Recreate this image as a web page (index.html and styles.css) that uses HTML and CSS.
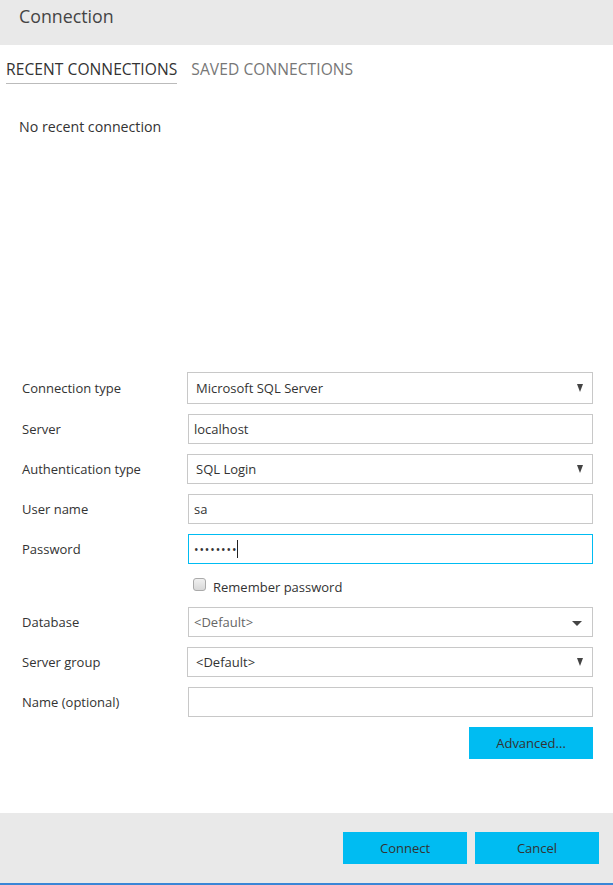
FILE: index.html
```html
<!DOCTYPE html>
<html>
<head>
<meta charset="utf-8">
<link rel="stylesheet" href="styles.css">
</head>
<body>
<div class="dialog">
  <div class="header">Connection</div>
  <div class="tabs">
    <div class="tab active">RECENT CONNECTIONS</div>
    <div class="tab">SAVED CONNECTIONS</div>
  </div>
  <div class="recent">No recent connection</div>
  <div class="form">
    <div class="label">Connection type</div>
    <div class="control select first"><span>Microsoft SQL Server</span><span class="arrow"></span></div>

    <div class="label">Server</div>
    <div class="control input"><span>localhost</span></div>

    <div class="label">Authentication type</div>
    <div class="control select"><span>SQL Login</span><span class="arrow"></span></div>

    <div class="label">User name</div>
    <div class="control input"><span>sa</span></div>

    <div class="label">Password</div>
    <div class="control input focus"><span class="dots">••••••••</span><span class="caret"></span></div>

    <div class="label"></div>
    <div class="check-row"><span class="checkbox"></span><span>Remember password</span></div>

    <div class="label">Database</div>
    <div class="control input combo"><span class="muted">&lt;Default&gt;</span><span class="arrow wide"></span></div>

    <div class="label">Server group</div>
    <div class="control select"><span>&lt;Default&gt;</span><span class="arrow"></span></div>

    <div class="label">Name (optional)</div>
    <div class="control input"></div>

    <div class="label"></div>
    <div class="adv-row"><button class="btn adv">Advanced...</button></div>
  </div>
  <div class="spacer"></div>
  <div class="footer">
    <button class="btn">Connect</button>
    <button class="btn">Cancel</button>
  </div>
</div>
</body>
</html>
```

FILE: styles.css
```css
* { box-sizing: border-box; }
html, body { margin: 0; padding: 0; }
body {
  width: 613px;
  height: 885px;
  background: #fff;
  font-family: "Open Sans", "Noto Sans", sans-serif;
  font-size: 12.5px;
  color: #333;
  overflow: hidden;
}
.dialog {
  height: 885px;
  display: flex;
  flex-direction: column;
}
.header {
  height: 45px;
  flex: none;
  background: #e9e9e9;
  color: #444;
  font-size: 17.8px;
  padding: 4px 0 0 19px;
}
.tabs {
  display: flex;
  padding: 13px 0 0 6px;
  gap: 14px;
  height: 40px;
  flex: none;
}
.tab {
  font-size: 15.6px;
  color: #777;
  height: 26px;
  letter-spacing: 0.05px;
}
.tab.active {
  color: #333;
  border-bottom: 1px solid #bbb;
}
.recent {
  padding: 32px 0 0 19px;
  height: 287px;
  flex: none;
  font-size: 14.2px;
  color: #333;
}
.form {
  display: grid;
  grid-template-columns: 166px 405px;
  grid-template-rows: 32px 30px 30px 30px 30px 23px 30px 30px 30px 32px;
  row-gap: 10px;
  padding-left: 22px;
  flex: none;
}
.label {
  display: flex;
  align-items: center;
  font-size: 13px;
  color: #333;
}
.control {
  border: 1px solid #c8c8c8;
  display: flex;
  align-items: center;
  padding: 0 8px 0 5px;
  font-size: 13px;
  color: #333;
}
.control.select { padding-left: 8px; margin-left: -1px; }
.control.focus { border-color: #00bcf2; }
.muted { color: #666; }
.dots { letter-spacing: 0.9px; font-size: 12px; color: #333; }
.caret {
  display: inline-block;
  width: 1px;
  height: 18px;
  background: #222;
  margin-left: 0;
}
.arrow {
  margin-left: auto;
  width: 0;
  height: 0;
  border-left: 3.5px solid transparent;
  border-right: 3.5px solid transparent;
  border-top: 8px solid #444;
  margin-right: 1px;
}
.arrow.wide {
  border-left-width: 5px;
  border-right-width: 5px;
  border-top-width: 5px;
  margin-right: 2px;
  margin-top: 2px;
}
.check-row {
  display: flex;
  align-items: center;
  padding-left: 5px;
  padding-top: 2px;
  gap: 7px;
  font-size: 13px;
  color: #333;
}
.checkbox {
  width: 13px;
  height: 13px;
  border: 1px solid #aaa;
  border-radius: 3px;
  background: linear-gradient(#f0f0f0, #d8d8d8);
  margin-top: -4px;
}
.adv-row {
  display: flex;
  justify-content: flex-end;
}
.btn {
  width: 124px;
  height: 32px;
  background: #00bcf2;
  border: none;
  color: #333;
  font-family: "Open Sans", "Noto Sans", sans-serif;
  font-size: 13px;
  padding: 0;
}
.spacer { flex: 1; }
.footer {
  height: 72px;
  flex: none;
  background: #e9e9e9;
  border-bottom: 2px solid #3a86d6;
  display: flex;
  justify-content: flex-end;
  gap: 8px;
  padding: 19px 14px 0 0;
}
```
